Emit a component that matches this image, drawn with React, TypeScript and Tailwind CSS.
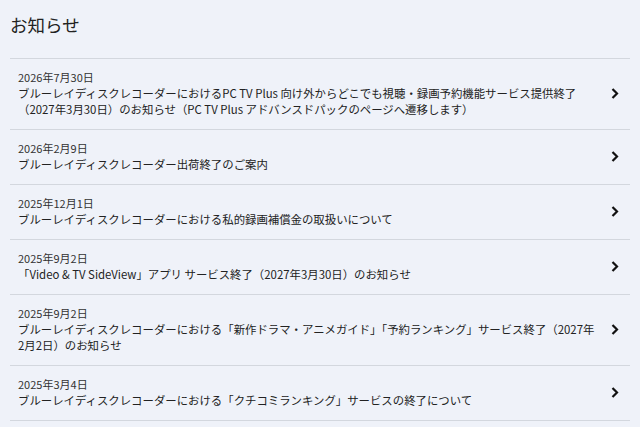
import React from "react";

// News entries shown in the list
interface NewsItem {
    date: string;
    title: string;
}

const newsItems: NewsItem[] = [
    {
        date: "2026年7月30日",
        title: "ブルーレイディスクレコーダーにおけるPC TV Plus 向け外からどこでも視聴・録画予約機能サービス提供終了（2027年3月30日）のお知らせ（PC TV Plus アドバンスドパックのページへ遷移します）",
    },
    { date: "2026年2月9日", title: "ブルーレイディスクレコーダー出荷終了のご案内" },
    { date: "2025年12月1日", title: "ブルーレイディスクレコーダーにおける私的録画補償金の取扱いについて" },
    { date: "2025年9月2日", title: "「Video & TV SideView」アプリ サービス終了（2027年3月30日）のお知らせ" },
    {
        date: "2025年9月2日",
        title: "ブルーレイディスクレコーダーにおける「新作ドラマ・アニメガイド」「予約ランキング」サービス終了（2027年2月2日）のお知らせ",
    },
    { date: "2025年3月4日", title: "ブルーレイディスクレコーダーにおける「クチコミランキング」サービスの終了について" },
];

const Chevron = () => (
    <svg width="8" height="11" viewBox="0 0 8 11" className="shrink-0">
        <path d="M1.5 1 L6 5.5 L1.5 10" fill="none" stroke="#111" strokeWidth="2.2" />
    </svg>
);

const App = () => {
    return (
        <div className="min-h-screen bg-[#eff2f9] px-[10px] pt-[11px] font-['Noto_Sans_CJK_JP','Noto_Sans',sans-serif] text-[#222]">
            <h1 className="text-[17.5px] leading-[28px] font-normal">お知らせ</h1>

            <ul className="mt-[19px] border-t border-[#d3d7de]">
                {newsItems.map((item, i) => (
                    <li key={i} className="border-b border-[#d3d7de]">
                        <a href="#" className="flex items-center pl-2 pr-[11px] pt-[10px] pb-[12px]">
                            <div className="flex-1 pr-[12px]">
                                <p className="text-[11px] leading-[16px] text-[#333]">{item.date}</p>
                                <p className="text-[11.4px] leading-[16px]">{item.title}</p>
                            </div>
                            <Chevron />
                        </a>
                    </li>
                ))}
            </ul>
        </div>
    );
};

export default App;
